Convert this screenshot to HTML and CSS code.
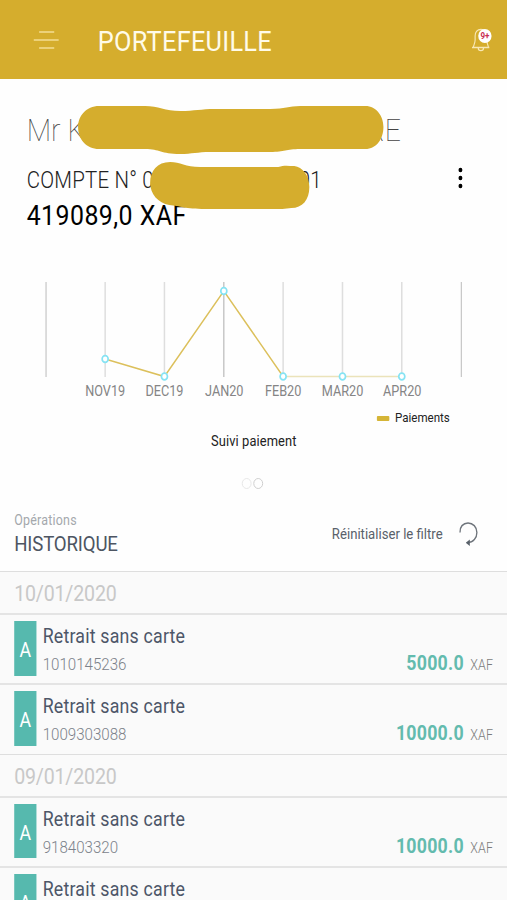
FILE: index.html
```
<!DOCTYPE html>
<html lang="fr">
<head>
  <meta charset="UTF-8">
  <title>Portefeuille</title>
  <link rel="stylesheet" href="styles.css">
</head>
<body>
  <div class="screen">
    <div class="header">
      <svg class="menu" width="30" height="20" viewBox="0 0 30 20">
        <path d="M7 2H24M1 10H29M7 18H24"/>
      </svg>
      <h1 class="header-title">PORTEFEUILLE</h1>
      <div class="bell">
        <svg width="22" height="26" viewBox="0 0 22 26">
          <path d="M1 20.5H20.5M2.5 20.5C2.5 18 4.5 17 4.5 13V9C4.5 5 7 2.5 11 2.5S17.5 5 17.5 9V13C17.5 17 19.5 18 19.5 20.5M8 21C8 24.5 14 24.5 14 21"/>
        </svg>
        <span class="bell-count">9+</span>
      </div>
    </div>

    <div class="account">
      <div class="name"><span>Mr K</span><span>RE</span></div>
      <div class="number"><span>COMPTE N° 0</span><span>01</span></div>
      <div class="balance">419089,0 XAF</div>
      <svg class="more" width="6" height="22" viewBox="0 0 6 22">
        <circle cx="3" cy="3" r="2.2"/><circle cx="3" cy="11" r="2.2"/><circle cx="3" cy="19" r="2.2"/>
      </svg>
      <svg class="mask" viewBox="0 0 507 153" preserveAspectRatio="none">
        <path d="M99 27H145C158 27 165 32 180 32C195 32 200 30 215 30H270C285 30 288 27 300 27H365C376 27 383 37 383 48C383 60 376 70 365 70H300C285 70 285 73 270 73H210C197 73 192 75 180 75C160 75 160 70 145 70H99C86 70 78 60 78 48C78 37 86 27 99 27Z"/>
        <path d="M170 83C180 83 185 88 200 88H278C284 86 288 87 294 87C302 88 309 96 309 108C309 121 302 129 291 129C285 130 280 130 270 130H205C185 130 180 127 169 126C158 124 150 115 150 104C150 92 157 83 170 83Z"/>
      </svg>
    </div>

    <svg class="chart" width="570" height="132" viewBox="0 0 570 132">
      <path class="edge" d="M51.8 10V105M519 10V105"/>
      <path class="grid" d="M118.3 10V105M185 10V105M318.5 10V105M385.3 10V105M452 10V105"/>
      <path class="grid-on" d="M251.8 10V105"/>
      <path class="line-flat" d="M318.5 104.5H452"/>
      <path class="line" d="M118.3 87L185 104.5L251.8 19L318.5 104.5"/>
      <g class="points">
        <circle cx="118.3" cy="87" r="3.4"/>
        <circle cx="185" cy="104.5" r="3.4"/>
        <circle cx="251.8" cy="19" r="3.4"/>
        <circle cx="318.5" cy="104.5" r="3.4"/>
        <circle cx="385.3" cy="104.5" r="3.4"/>
        <circle cx="452" cy="104.5" r="3.4"/>
      </g>
      <g class="months">
        <text x="118.3" y="124">NOV19</text>
        <text x="185" y="124">DEC19</text>
        <text x="252.3" y="124">JAN20</text>
        <text x="318.5" y="124">FEB20</text>
        <text x="385.3" y="124">MAR20</text>
        <text x="452.5" y="124">APR20</text>
      </g>
    </svg>
    <div class="legend"><i></i>Paiements</div>
    <div class="chart-title">Suivi paiement</div>
    <div class="pager"><i></i><i class="on"></i></div>

    <div class="history">
      <div>
        <div class="history-sub">Opérations</div>
        <h2 class="history-title">HISTORIQUE</h2>
      </div>
      <div class="reset">
        <span>Réinitialiser le filtre</span>
        <svg width="22" height="24" viewBox="0 0 22 24">
          <path class="arc" d="M1.5 10.5C1 5 5 .9 10.5 .9C16 .9 20.5 5 20.5 10.500C20.5 16 16.5 20.500 10 20.800"/>
          <path class="tip" d="M12.500 17.500L8 20.800L12.500 24Z"/>
        </svg>
      </div>
    </div>

    <div class="date">10/01/2020</div>
    <div class="item">
      <div class="tag">A</div>
      <div class="info">
        <div class="label">Retrait sans carte</div>
        <div class="ref">1010145236</div>
      </div>
      <div class="amount">5000.0 <small>XAF</small></div>
    </div>
    <div class="item">
      <div class="tag">A</div>
      <div class="info">
        <div class="label">Retrait sans carte</div>
        <div class="ref">1009303088</div>
      </div>
      <div class="amount">10000.0 <small>XAF</small></div>
    </div>
    <div class="date">09/01/2020</div>
    <div class="item">
      <div class="tag">A</div>
      <div class="info">
        <div class="label">Retrait sans carte</div>
        <div class="ref">918403320</div>
      </div>
      <div class="amount">10000.0 <small>XAF</small></div>
    </div>
    <div class="item">
      <div class="tag">A</div>
      <div class="info">
        <div class="label">Retrait sans carte</div>
      </div>
    </div>
  </div>
</body>
</html>
```
FILE: styles.css
```
*{margin: 0;box-sizing: border-box;}
html, body{
  height: 900px;
  overflow: hidden;
}
body{
  font-family: Roboto, "Liberation Sans", sans-serif;
  background: #fefefe;
}
svg{display: block;fill: none;}
/* 18:9 screen shown in a 16:9 window */
.screen{
  width: 571px;
  height: 900px;
  overflow: hidden;
  transform: scaleX(.8889);
  transform-origin: 0 0;
}
.header{
  display: flex;
  align-items: center;
  height: 79px;
  padding: 0 19px 0 37px;
  background: #d5ad2d;
}
.menu{stroke: #f3dd93;stroke-width: 1.3;}
.header-title{
  flex: 1;
  margin: 4px 0 0 43px;
  color: #fffbe8;
  font-size: 28.5px;
  font-weight: 400;
  letter-spacing: .3px;
}
.bell{position: relative;stroke: #f8e8b4;stroke-width: 1.3;}
.bell-count{
  position: absolute;
  top: 2px;
  right: -1px;
  width: 15px;
  height: 14px;
  border-radius: 50%;
  background: #fff;
  color: #c92f50;
  font-size: 9px;
  font-weight: 700;
  line-height: 14px;
  text-align: center;
}
.account{
  position: relative;
  height: 153px;
  padding: 32px 0 0 30px;
}
.name{
  display: flex;
  justify-content: space-between;
  width: 421px;
  color: #444;
  font-size: 32px;
  font-weight: 100;
  line-height: 38px;
}
.number{
  display: flex;
  justify-content: space-between;
  width: 332px;
  margin-top: 18px;
  color: #222;
  font-size: 23px;
  font-weight: 300;
  letter-spacing: .25px;
  line-height: 28px;
}
.balance{
  margin-top: 4px;
  color: #000;
  font-size: 28px;
  letter-spacing: .5px;
  line-height: 34px;
}
.more{
  position: absolute;
  top: 88px;
  right: 50px;
  fill: #000;
}
.mask{
  position: absolute;
  top: 0;
  left: 0;
  width: 100%;
  height: 153px;
  fill: #d5ad2d;
}
.chart{margin-top: 40px;}
.edge{stroke: #c4c4c4;stroke-width: 1.3;}
.grid{stroke: #dedede;stroke-width: 1.7;}
.grid-on{stroke: #b8b8b8;stroke-width: 1.3;}
.line{stroke: #dcc05c;stroke-width: 1.6;}
.line-flat{stroke: #ebe3ba;stroke-width: 1.3;}
.points{fill: #fff;stroke: #86e3f3;stroke-width: 1.9;}
.months{
  fill: #858585;
  font-size: 14.3px;
  text-anchor: middle;
}
.legend{
  display: flex;
  align-items: center;
  justify-content: flex-end;
  margin-top: 6px;
  padding-right: 65px;
  color: #222;
  font-size: 13px;
  line-height: 16px;
}
.legend i{
  width: 14px;
  height: 5px;
  margin-right: 6px;
  background: #d5b537;
  border-radius: 1px;
}
.chart-title{
  margin-top: 7px;
  color: #222;
  font-size: 14.5px;
  letter-spacing: .1px;
  line-height: 18px;
  text-align: center;
}
.pager{
  display: flex;
  justify-content: center;
  gap: 2px;
  margin-top: 27px;
  padding-right: 3px;
}
.pager i{
  width: 11px;
  height: 11px;
  border: 1px solid #e5e5e5;
  border-radius: 50%;
}
.pager .on{border-color: #ccc;}
.history{
  display: flex;
  justify-content: space-between;
  height: 82px;
  padding: 23px 33px 0 16px;
}
.history-sub{
  color: #a4a8ac;
  font-size: 14px;
  letter-spacing: .25px;
  line-height: 16px;
}
.history-title{
  margin-top: 3px;
  color: #4d5562;
  font-size: 21px;
  font-weight: 400;
  letter-spacing: -.2px;
  line-height: 26px;
}
.reset{
  display: flex;
  align-items: center;
  height: 43px;
  gap: 18px;
  color: #59616a;
  font-size: 14.8px;
}
.arc{stroke: #6e747b;stroke-width: 1.5;}
.tip{fill: #59616a;}
.date{
  height: 42.2px;
  padding-left: 16px;
  border-top: 1.5px solid #dedede;
  background: #fafafa;
  color: #c8c8c8;
  font-size: 22px;
  letter-spacing: -.2px;
  line-height: 43px;
}
.item{
  display: flex;
  height: 70.2px;
  padding: 6px 16px 0;
  border-top: 2px solid #e4e4e4;
  background: #fafafa;
}
.tag{
  width: 25px;
  height: 54.5px;
  background: #56b9ae;
  color: #fff;
  font-size: 20px;
  line-height: 58px;
  text-align: center;
}
.info{
  flex: 1;
  padding-left: 7px;
}
.label{
  padding-top: 2px;
  color: #4d5668;
  font-size: 20px;
  letter-spacing: .22px;
  line-height: 26px;
}
.ref{
  margin-top: 4px;
  color: #7c828a;
  font-size: 17px;
  font-weight: 300;
  line-height: 22px;
}
.amount{
  padding-top: 29px;
  color: #63bbae;
  font-size: 20px;
  font-weight: 700;
  letter-spacing: .25px;
  line-height: 27px;
}
.amount small{
  margin-left: 2px;
  color: #7c7c7c;
  font-size: 14px;
  font-weight: 300;
}
```
